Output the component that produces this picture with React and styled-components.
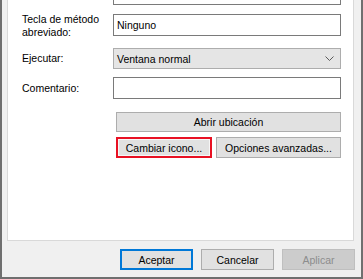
import React from "react";
import styled, { createGlobalStyle, css } from "styled-components";

const GlobalStyle = createGlobalStyle`
  html, body {
    margin: 0;
    padding: 0;
    background: #f0f0f0;
  }
  body {
    font-family: "Liberation Sans", Arial, sans-serif;
    font-size: 10.5px;
    color: #000;
  }
`;

const Window = styled.div`
  width: 363px;
  height: 279px;
  box-sizing: border-box;
  border: 2px solid #6f6f6f;
  border-top: none;
  background: #f0f0f0;
  display: flex;
  flex-direction: column;
`;

const Panel = styled.div`
  flex: none;
  height: 241px;
  margin: 0 7px 0 5px;
  box-sizing: border-box;
  background: #fff;
  border: 1px solid #d9d9d9;
  border-top: none;
  display: flex;
  flex-direction: column;
  justify-content: flex-end;
  overflow: hidden;
  padding: 0 12px 82px 14px;
`;

const FieldRow = styled.div`
  flex: none;
  display: grid;
  grid-template-columns: 91px 1fr;
  align-items: ${(p) => (p.$top ? "start" : "center")};
  margin-top: ${(p) => p.$gap || 0}px;
`;

const Label = styled.div`
  line-height: 13px;
  margin-top: ${(p) => (p.$top ? "-1px" : "0")};
`;

const TextBox = styled.div`
  height: 22px;
  box-sizing: border-box;
  border: 1px solid #7a7a7a;
  background: #fff;
  padding: 0 3px;
  display: flex;
  align-items: center;
  white-space: nowrap;
  overflow: hidden;
`;

const Combo = styled.div`
  height: 21px;
  box-sizing: border-box;
  border: 1px solid #adadad;
  background: #e5e5e5;
  padding: 0 6px 0 3px;
  display: flex;
  align-items: center;
  justify-content: space-between;
`;

const Chevron = () => (
  <svg width="9" height="5" viewBox="0 0 9 5">
    <polyline points="0.5,0.5 4.5,4.5 8.5,0.5" fill="none" stroke="#5a5a5a" strokeWidth="1" />
  </svg>
);

const ActionRow = styled.div`
  flex: none;
  display: flex;
  gap: 4px;
  padding-left: 94px;
  margin-top: ${(p) => p.$gap || 0}px;
`;

const Button = styled.div`
  height: ${(p) => p.$h || 21}px;
  width: ${(p) => (p.$w ? `${p.$w}px` : "auto")};
  flex: ${(p) => (p.$w ? "none" : "1")};
  box-sizing: border-box;
  display: flex;
  align-items: center;
  justify-content: center;
  background: #e1e1e1;
  border: 1px solid #adadad;
  white-space: nowrap;
  ${(p) =>
    p.$variant === "focus" &&
    css`
      border: 2px solid #e81123;
      box-shadow: inset 0 0 0 1px #f6f6f6;
    `}
  ${(p) =>
    p.$variant === "default" &&
    css`
      border: 2px solid #0078d7;
    `}
  ${(p) =>
    p.$variant === "disabled" &&
    css`
      background: #cccccc;
      border-color: #bfbfbf;
      color: #8d8d8d;
    `}
`;

const Footer = styled.div`
  flex: none;
  display: flex;
  justify-content: flex-end;
  gap: 8px;
  padding: 8px 6px 0 0;
`;

export default function App() {
  return (
    <>
      <GlobalStyle />
      <Window>
        <Panel>
          <FieldRow>
            <span />
            <TextBox>C:\Program Files (x86)\Google\Chrome\Application</TextBox>
          </FieldRow>
          <FieldRow $gap={9} $top>
            <Label $top>
              Tecla de método
              <br />
              abreviado:
            </Label>
            <TextBox>Ninguno</TextBox>
          </FieldRow>
          <FieldRow $gap={9}>
            <Label>Ejecutar:</Label>
            <Combo>
              <span>Ventana normal</span>
              <Chevron />
            </Combo>
          </FieldRow>
          <FieldRow $gap={8}>
            <Label>Comentario:</Label>
            <TextBox />
          </FieldRow>
          <ActionRow $gap={13}>
            <Button $h={20}>Abrir ubicación</Button>
          </ActionRow>
          <ActionRow $gap={5}>
            <Button $w={96} $variant="focus">
              Cambiar icono...
            </Button>
            <Button>Opciones avanzadas...</Button>
          </ActionRow>
        </Panel>
        <Footer>
          <Button $w={73} $variant="default">
            Aceptar
          </Button>
          <Button $w={73}>Cancelar</Button>
          <Button $w={73} $variant="disabled">
            Aplicar
          </Button>
        </Footer>
      </Window>
    </>
  );
}
